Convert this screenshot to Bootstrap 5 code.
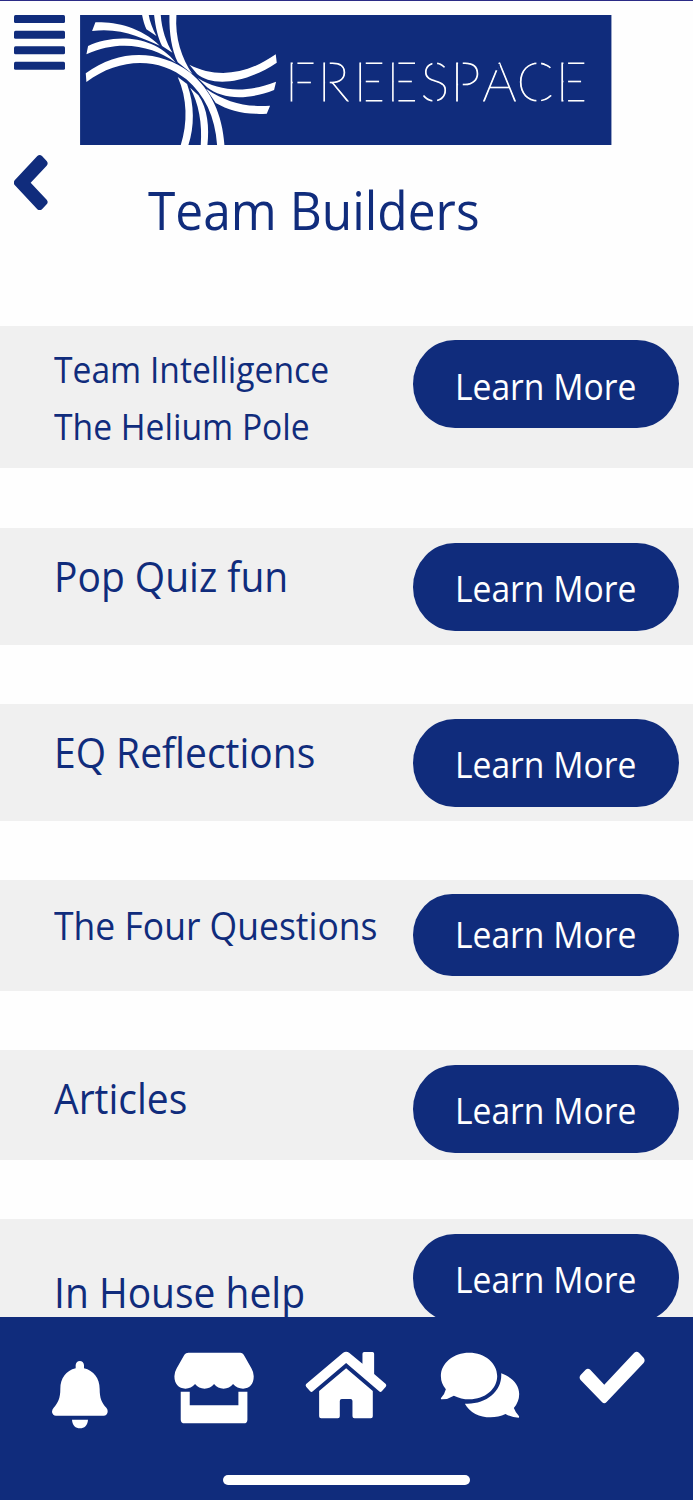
<!DOCTYPE html>
<html lang="en">
<head>
<meta charset="utf-8">
<meta name="viewport" content="width=device-width, initial-scale=1">
<title>Team Builders</title>
<link href="https://cdn.jsdelivr.net/npm/bootstrap@5.3.0/dist/css/bootstrap.min.css" rel="stylesheet">
<style>
:root{--navy:#102c7c}
html,body{height:100%}
body{font-family:"Open Sans","Noto Sans",sans-serif;color:var(--navy);background:#fefefe;overflow:hidden}
svg{display:block}
.screen{height:1500px;border-top:1px solid #2b2b86}
.top-bar{padding:14px 14px 0;gap:15px}
.title-bar{padding:10px 14px 0;height:180.500px}
.page-title{font-size:53px;line-height:72px;margin:19px 0 0 99.500px;font-weight:400}
.page-title .squeeze{transform:scaleX(.937)}
.squeeze{display:inline-block;white-space:nowrap;transform:scaleX(.934);transform-origin:0 50%}
.item{background:#f0f0f0;padding:15px 14px 0 54px}
.item-title{font-size:42px;line-height:57px;margin-left:-.5px}
.item-title .squeeze{transform:scaleX(.928)}
.item-title.smaller .squeeze{transform:scaleX(.934)}
.pill{background:var(--navy)!important;color:#fff!important;border:0;width:266px;height:88px;border-radius:42px/44px;font-size:36px;line-height:84px;padding:4px 0 0 42px;text-align:left}
.tab-bar{background:var(--navy);height:183px}
.home-line{width:247px;height:10px}
</style>
</head>
<body>
<div class="screen d-flex flex-column overflow-hidden">
  <header class="top-bar d-flex align-items-start flex-shrink-0">
    <svg width="51" height="55" viewBox="0 0 51 55" fill="#102c7c" aria-label="Menu"><rect width="51" height="8" rx="1.5"/><rect y="15.7" width="51" height="8" rx="1.5"/><rect y="31.2" width="51" height="8" rx="1.5"/><rect y="46.7" width="51" height="8" rx="1.5"/></svg>
    <svg width="531.5" height="130" viewBox="241 45 1594 390" aria-label="Freespace">
      <rect x="241" y="45" width="1594" height="390" fill="#102c7c"/>
      <g fill="#fff">
        <path d="M287 67C350 66 420 80 480 137C430 116 365 81 277 93Z"/>
        <path d="M265 138C340 103 460 102 528 188C460 138 360 117 260 163Z"/>
        <path d="M427 45C430 60 434 75 440 88L470 108C458 86 450 64 447 45Z"/>
        <path d="M463 45C467 80 475 115 487 138L518 158C500 128 486 90 483 45Z"/>
        <path d="M509 45C508 100 516 150 534 187L578 222C546 175 525 115 530 45Z"/>
        <path d="M258 220C360 145 480 150 570 217C635 270 668 345 674 435H652C646 350 615 285 560 238C480 172 360 170 260 246Z"/>
        <path d="M569 194C650 235 740 225 828 163L831 188C730 255 635 258 592 222Z"/>
        <path d="M594 234C660 275 740 280 829 245L823 270C740 303 665 297 622 262Z"/>
        <path d="M619 266C680 308 740 322 811 317L801 341C740 345 690 333 648 309Z"/>
        <path d="M534 231L562 252C585 315 584 380 566 435H543C564 370 563 295 534 231Z"/>
        <path d="M571 263L596 286C624 325 629 385 623 435H603C608 370 597 310 571 263Z"/>
      </g>
      <text y="304" x="856 954 1062 1160 1263 1352 1448 1551 1668" font-family="Lato" font-weight="100" font-size="160" fill="#fff" stroke="#fff" stroke-width="3">FREESPACE</text>
      <path d="M886 180V310M983 180V310M1091 180V310M1189 180V310M1382 180V310M1698 180V310M1305 182V200M1305 292V312M1617 182V200M1617 292V312" stroke="#102c7c" stroke-width="14"/>
      <path d="M1490 211L1497 192M1016 251L1022 262" stroke="#102c7c" stroke-width="8"/>
    </svg>
  </header>
  <div class="title-bar d-flex align-items-start flex-shrink-0">
    <svg width="34" height="55" viewBox="42 464 102 165" fill="#102c7c" aria-label="Back"><path d="M112 467Q119 461 126 467L140 482Q146 489 140 496L92 547L140 598Q146 605 140 612L126 627Q119 632 112 627L44 554Q39 547 44 540Z"/></svg>
    <h1 class="page-title"><span class="squeeze">Team Builders</span></h1>
  </div>
  <main class="flex-grow-1 overflow-hidden" style="min-height:0">
    <section class="item d-flex justify-content-between align-items-start" style="height:142.500px;margin-bottom:60px;padding-top:14.500px"><div class="item-title smaller" style="font-size:36px;padding-top:1px"><span class="squeeze">Team Intelligence<br>The Helium Pole</span></div><button class="btn pill flex-shrink-0" style="padding-top:5px"><span class="squeeze">Learn More</span></button></section>
    <section class="item d-flex justify-content-between align-items-start" style="height:117px;margin-bottom:59px"><div class="item-title" style="padding-top:4px"><span class="squeeze">Pop Quiz fun</span></div><button class="btn pill flex-shrink-0"><span class="squeeze">Learn More</span></button></section>
    <section class="item d-flex justify-content-between align-items-start" style="height:117px;margin-bottom:59px"><div class="item-title" style="padding-top:4px"><span class="squeeze">EQ Reflections</span></div><button class="btn pill flex-shrink-0"><span class="squeeze">Learn More</span></button></section>
    <section class="item d-flex justify-content-between align-items-start" style="height:111px;margin-bottom:59px;padding-top:14px"><div class="item-title smaller" style="font-size:38px;padding-top:3px;width:340px"><span class="squeeze">The Four Questions</span></div><button class="btn pill flex-shrink-0" style="height:82px;line-height:82px;padding-top:0"><span class="squeeze">Learn More</span></button></section>
    <section class="item d-flex justify-content-between align-items-start" style="height:110px;margin-bottom:59px"><div class="item-title" style="padding-top:4px"><span class="squeeze">Articles</span></div><button class="btn pill flex-shrink-0"><span class="squeeze">Learn More</span></button></section>
    <section class="item d-flex justify-content-between align-items-start" style="height:117px;padding-top:14.500px"><div class="item-title" style="padding-top:29px"><span class="squeeze">In House help</span></div><button class="btn pill flex-shrink-0"><span class="squeeze">Learn More</span></button></section>
  </main>
  <nav class="tab-bar flex-shrink-0 d-flex flex-column align-items-center">
    <div class="d-flex w-100">
      <svg width="138.6" height="158" viewBox="0 22 415.8 474" fill="#fff"><path d="M227 176V166Q229 154 239.500 154Q250 154 252 166V176C281 183 299 206 299 238C299 265 305 280 319 294Q324 299 323 307Q321 318 311 318H168Q158 318 156 307Q156 299 161 294C174 280 181 265 181 238C181 206 198 183 227 176ZM216 330H264C263 347 253 356 240 356S217 347 216 330Z"/></svg>
      <svg width="138.6" height="158" viewBox="415.8 22 415.8 474" fill="#fff"><path d="M564 129H720Q726 129 730 135L753 176Q760 188 760 200C760 223 748 237 728 237Q710 237 698 223Q687 237 669.500 237Q652 237 641 223Q630 237 612.500 237Q595 237 584 223Q572 237 555 237C535 237 522 223 522 200Q522 188 529 176L552 135Q556 129 564 129ZM541 246H568V287H714V246H741V330Q741 341 730 341H553Q541 341 541 330Z"/></svg>
      <svg width="138.6" height="158" viewBox="831.6 22 415.8 474" fill="#fff"><g transform="translate(810)"><path d="M220 129Q229 123 238 129L278 162V132Q278 127 283 127H308Q313 127 313 132V193L348 223Q351 227 348 231L336 245Q332 249 328 245L229 160L129 245Q125 249 121 245L109 231Q106 227 109 223ZM229 176L309 244V320Q309 326 303 326H254Q248 326 248 320V274Q248 268 242 268H216Q210 268 210 274V320Q210 326 204 326H154Q148 326 148 320V244Z"/></g></svg>
      <svg width="138.6" height="158" viewBox="1247.4 22 415.8 474" fill="#fff"><g transform="translate(810)"><path d="M597 129C644 129 681 160 681 199S644 269 597 269Q573 269 551 258Q532 270 513 269Q511 267 513 264Q523 255 527 239Q512 221 512 199C512 160 550 129 597 129ZM693 191C726 202 747 226 747 253Q747 276 731 295Q736 309 746 319Q748 323 745 324Q726 324 706 313C662 334 604 321 584 282C647 286 697 245 693 191Z"/></g></svg>
      <svg width="138.6" height="158" viewBox="1663.200 22 415.8 474" fill="#fff"><g transform="translate(1620)"><path d="M138 180Q145 175 152 180L194 225L284 129Q291 124 298 129L312 144Q318 152 312 160L201 277Q194 284 187 277L123 211Q117 203 123 196Z"/></g></svg>
    </div>
    <div class="home-line bg-white rounded-pill"></div>
  </nav>
</div>
<script src="https://cdn.jsdelivr.net/npm/bootstrap@5.3.0/dist/js/bootstrap.bundle.min.js"></script>
</body>
</html>
